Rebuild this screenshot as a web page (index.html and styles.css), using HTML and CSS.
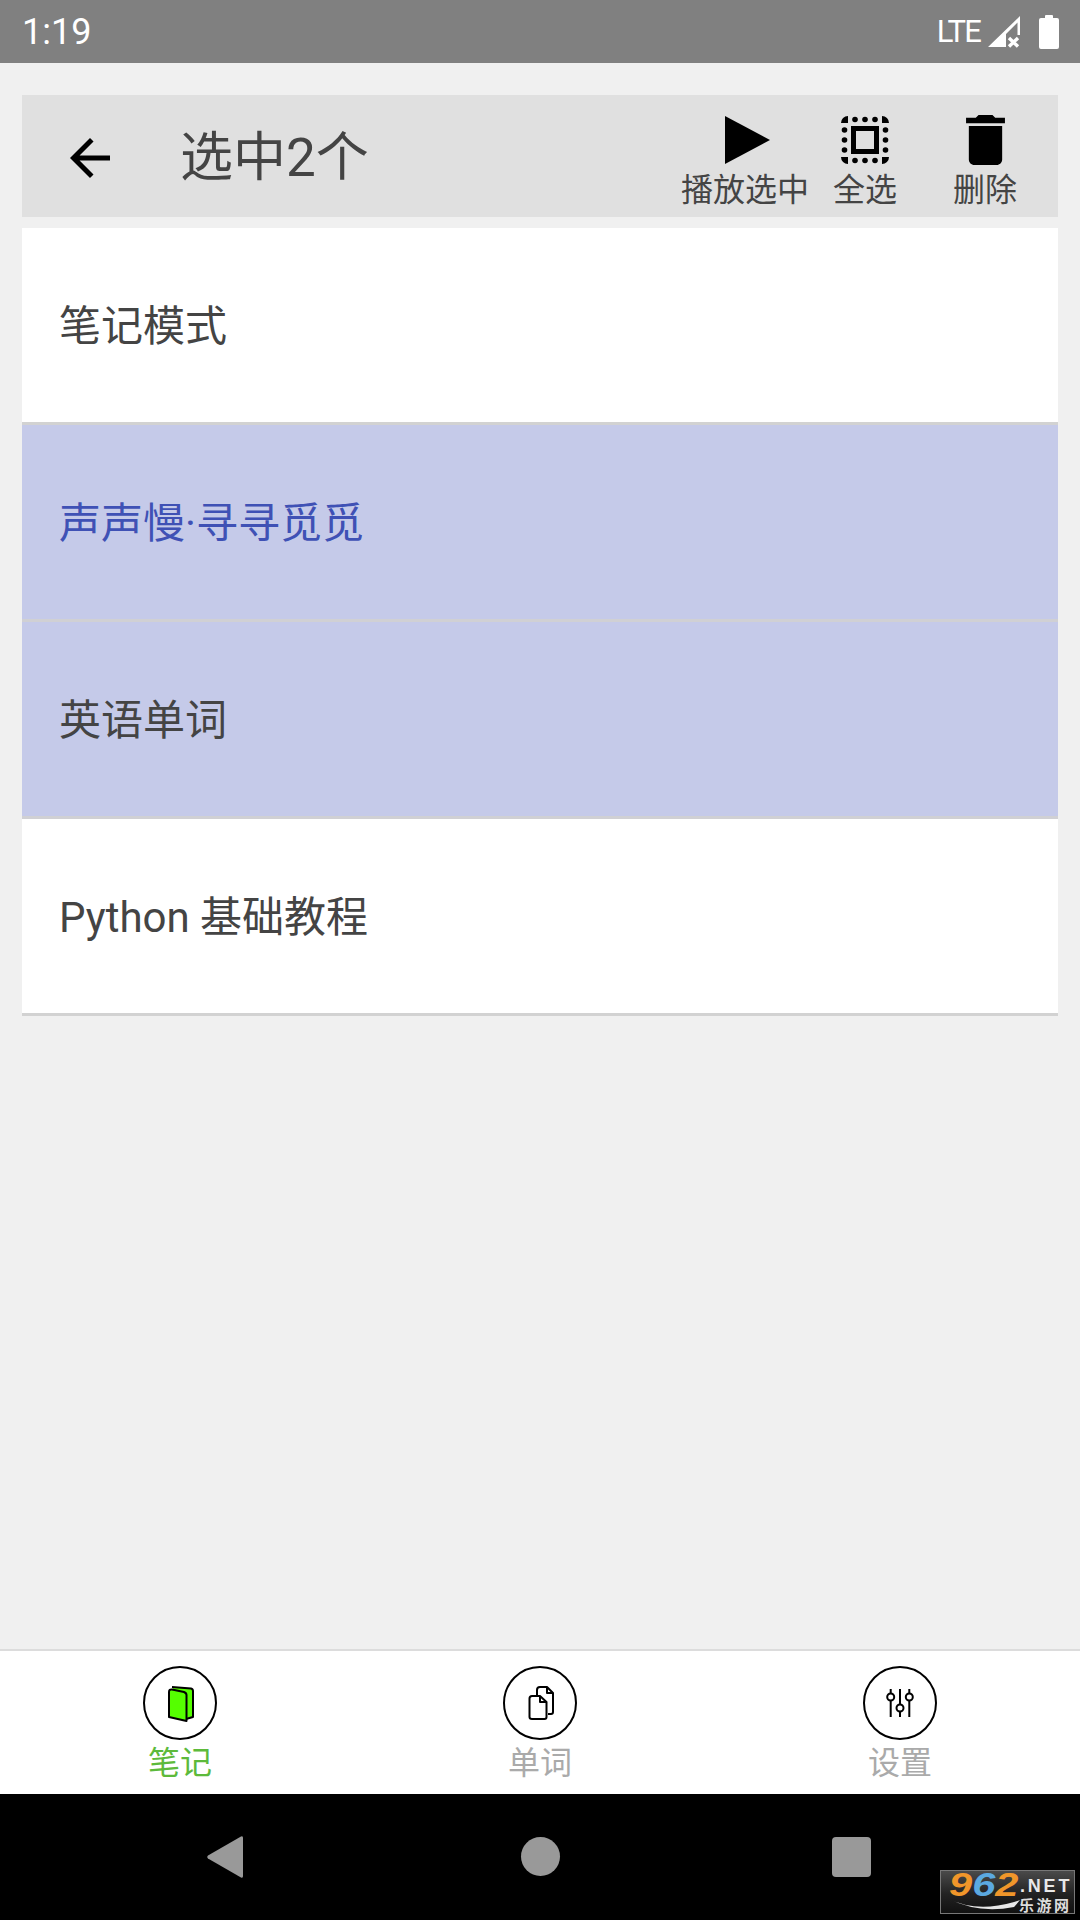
FILE: index.html
```html
<!DOCTYPE html>
<html lang="zh-CN">
<head>
<meta charset="utf-8">
<title>选中2个</title>
<link rel="stylesheet" href="styles.css">
</head>
<body>
<div class="app">
  <header class="status">
    <span class="time">1:19</span>
    <div class="status-right">
      <span class="lte">LTE</span>
      <svg class="signal" viewBox="0 0 32 32"><path fill="#fff" d="M0 31L32 0V19H29.500V6.500L18 18V31Z"/><path fill="none" stroke="#fff" stroke-width="3.400" d="M21 22l9 8.500M30 22l-9 8.500"/></svg>
      <svg class="battery" viewBox="0 0 20 34"><path fill="#fff" d="M6 1q0-1 1-1h6q1 0 1 1v2h4a2 2 0 0 1 2 2v27a2 2 0 0 1-2 2H2a2 2 0 0 1-2-2V5a2 2 0 0 1 2-2h4z"/></svg>
    </div>
  </header>
  <main class="content">
    <section class="toolbar">
      <svg class="back" viewBox="4 4 16 16"><path d="M20 11H7.830l5.590-5.590L12 4l-8 8 8 8 1.410-1.410L7.830 13H20v-2z"/></svg>
      <h1 class="title">选中2个</h1>
      <div class="actions">
        <div class="action action-wide">
          <svg class="action-icon play" viewBox="0 0 45 48"><path d="M0 0L45 24L0 48Z"/></svg>
          <span class="action-label">播放选中</span>
        </div>
        <div class="action action-narrow">
          <svg class="action-icon select" viewBox="0 0 50 50">
            <path d="M1 8A7 7 0 0 1 8 1V8ZM42 1A7 7 0 0 1 49 8H42ZM49 42A7 7 0 0 1 42 49V42ZM8 49A7 7 0 0 1 1 42H8Z"/>
            <g class="dots">
              <circle cx="15" cy="4.500" r="2.800"/><circle cx="25" cy="4.500" r="2.800"/><circle cx="35" cy="4.500" r="2.800"/>
              <circle cx="15" cy="45.500" r="2.800"/><circle cx="25" cy="45.500" r="2.800"/><circle cx="35" cy="45.500" r="2.800"/>
              <circle cx="4.500" cy="15" r="2.800"/><circle cx="4.500" cy="25" r="2.800"/><circle cx="4.500" cy="35" r="2.800"/>
              <circle cx="45.500" cy="15" r="2.800"/><circle cx="45.500" cy="25" r="2.800"/><circle cx="45.500" cy="35" r="2.800"/>
            </g>
            <rect class="select-box" x="13.500" y="13.500" width="23" height="23"/>
          </svg>
          <span class="action-label">全选</span>
        </div>
        <div class="action action-wide">
          <svg class="action-icon trash" viewBox="5 3 14 18"><path d="M6 19c0 1.100.900 2 2 2h8c1.100 0 2-.900 2-2V7H6v12zM19 4h-3.500l-1-1h-5l-1 1H5v2h14V4z"/></svg>
          <span class="action-label">删除</span>
        </div>
      </div>
    </section>
    <ul class="list">
      <li class="row">笔记模式</li>
      <li class="row selected current">声声慢·寻寻觅觅</li>
      <li class="row selected">英语单词</li>
      <li class="row">Python 基础教程</li>
    </ul>
  </main>
  <nav class="tabs">
    <div class="tab active">
      <svg class="tab-icon" viewBox="0 0 76 76"><circle class="ring" cx="38" cy="38" r="36"/><path class="book-back" d="M30 22L49 23.500Q51 24 51 26V52L44 54"/><path class="book-front" d="M27 27Q27 24 30 24.500L42 27Q44.500 28 44.500 30V56L27 52Z"/></svg>
      <span>笔记</span>
    </div>
    <div class="tab">
      <svg class="tab-icon" viewBox="0 0 76 76"><circle class="ring" cx="38" cy="38" r="36"/><path class="line" d="M35 30V25Q35 22 38 22H45L51 28V47Q51 49 49 49H46M45 22V28H51"/><path class="line" d="M30 31H38L44.500 37V52Q44.500 54 42.500 54H30Q27.500 54 27.500 52V33.500Q27.500 31 30 31ZM38 31V37H44.500"/></svg>
      <span>单词</span>
    </div>
    <div class="tab">
      <svg class="tab-icon" viewBox="0 0 76 76"><circle class="ring" cx="38" cy="38" r="36"/><path class="line" d="M28.700 24V28.500M28.700 35.500V52M38 24V39.500M38 46.500V52M47.300 24V28.500M47.300 35.500V52"/><circle class="knob" cx="28.700" cy="32" r="3.500"/><circle class="knob" cx="38" cy="43" r="3.500"/><circle class="knob" cx="47.300" cy="32" r="3.500"/></svg>
      <span>设置</span>
    </div>
  </nav>
  <footer class="navbar">
    <svg class="nav-back" viewBox="0 0 36 42"><path d="M34 0.500Q36 -0.500 36 2V40Q36 42.500 34 41.500L1 22.500Q-0.500 21 1 19.500Z"/></svg>
    <span class="nav-home"></span>
    <span class="nav-recent"></span>
    <div class="watermark">
      <div class="wm-left">
        <div class="wm-digits"><span class="wm-o">9</span><span class="wm-b">6</span><span class="wm-o">2</span></div>
        <svg class="wm-swoosh" viewBox="0 0 72 14"><path d="M0 1Q28 15 66 4L72 2L66 9Q30 16 0 1Z"/></svg>
      </div>
      <div class="wm-right">
        <div class="wm-net">.NET</div>
        <div class="wm-sub">乐游网</div>
      </div>
    </div>
  </footer>
</div>
</body>
</html>
```
FILE: styles.css
```css
* { box-sizing: border-box; }
html, body { margin: 0; padding: 0; }
body { width: 1080px; height: 1920px; overflow: hidden; font-family: Roboto, "Noto Sans CJK SC", sans-serif; background: #f0f0f0; }
.app { display: flex; flex-direction: column; height: 1920px; }

.status { height: 63px; background: #808080; color: #fff; display: flex; align-items: center; justify-content: space-between; padding: 0 21px 0 22px; }
.time { font-size: 36px; line-height: 63px; padding-top: 2px; }
.status-right { display: flex; align-items: center; }
.lte { font-size: 31px; line-height: 63px; letter-spacing: -1.800px; }
.signal { width: 32px; height: 32px; margin-left: 8px; }
.battery { width: 20px; height: 34px; margin-left: 19px; }

.content { flex: 1; padding: 32px 22px 0; min-height: 0; }
.toolbar { height: 122px; background: #e0e0e0; display: flex; align-items: center; padding-left: 48px; }
.back { width: 40px; height: 42px; flex: none; margin-top: 3px; }
.title { margin: 3px 0 0 70px; font-size: 53px; font-weight: 400; color: #444; flex: 1; line-height: 60px; }
.actions { display: flex; padding: 20px 9px 0 0; height: 122px; }
.action { display: flex; flex-direction: column; align-items: center; }
.action-wide { width: 128px; }
.action-narrow { width: 112px; }
.action-icon { height: 50px; display: block; flex: none; }
.play { width: 45px; margin-left: 4px; }
.select { width: 50px; }
.select-box { fill: none; stroke: #000; stroke-width: 5; }
.trash { width: 39px; }
.action-label { font-size: 32px; line-height: 40px; color: #444; margin-top: 5px; white-space: nowrap; }

.list { list-style: none; margin: 11px 0 0; padding: 0; }
.row { height: 197px; background: #fff; border-bottom: 3px solid #d2d2d2; display: flex; align-items: center; padding: 0 0 5px 37px; font-size: 42px; color: #444; }
.row.selected { background: #c5cae9; border-bottom-color: #d0d0d4; }
.row.current { color: #3f51b5; }

.tabs { height: 145px; background: #fff; border-top: 2px solid #dcdcdc; display: grid; grid-template-columns: repeat(3, 360px); }
.tab { display: flex; flex-direction: column; align-items: center; padding-top: 14px; color: #aaa; font-size: 32px; line-height: 38px; }
.tab.active { color: #5dba3b; }
.tab-icon { width: 76px; height: 76px; display: block; flex: none; margin-bottom: 3px; }
.ring { fill: #fff; stroke: #000; stroke-width: 2; }
.line { fill: none; stroke: #000; stroke-width: 2; stroke-linejoin: round; }
.knob { fill: #fff; stroke: #000; stroke-width: 2; }
.book-back, .book-front { fill: #55ff00; stroke: #000; stroke-width: 2; stroke-linejoin: round; }

.navbar { position: relative; height: 126px; background: #000; }
.nav-back, .nav-home, .nav-recent { position: absolute; display: block; }
.nav-back { left: 207px; top: 42px; width: 36px; height: 42px; fill: #999; }
.nav-home { left: 521px; top: 43px; width: 39px; height: 39px; border-radius: 50%; background: #999; }
.nav-recent { left: 832px; top: 43px; width: 39px; height: 40px; border-radius: 4px; background: #999; }

.watermark { position: absolute; left: 940px; top: 76px; width: 135px; height: 44px; display: flex; background: linear-gradient(#4a4a4a, #222 55%, #111); border: 1px solid #777; font-family: "Liberation Sans", sans-serif; font-weight: 700; }
.wm-left { width: 79px; flex: none; padding: 1px 0 0 8px; }
.wm-digits { height: 26px; line-height: 26px; font-size: 33px; font-style: italic; white-space: nowrap; transform: scaleX(1.260); transform-origin: left center; }
.wm-o { color: #f0962a; }
.wm-b { color: #5ba9e0; }
.wm-swoosh { display: block; width: 71px; height: 14px; fill: #e8e8e8; }
.wm-right { flex: 1; padding-top: 4px; }
.wm-net { font-size: 18px; line-height: 22px; color: #e8e8e8; letter-spacing: 2.800px; white-space: nowrap; }
.wm-sub { font-family: "Noto Sans CJK SC", sans-serif; font-size: 15px; line-height: 16px; color: #ddd; letter-spacing: 2.500px; white-space: nowrap; margin-left: -1px; }
```
